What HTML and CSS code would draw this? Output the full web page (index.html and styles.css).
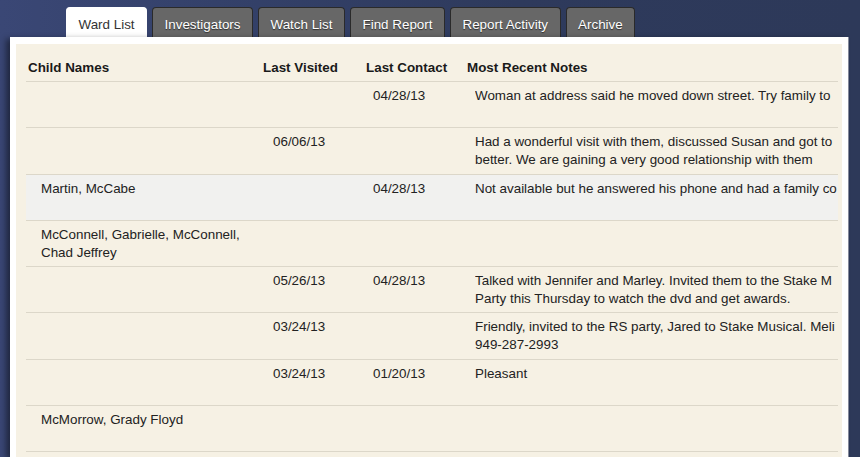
FILE: index.html
```html
<!DOCTYPE html>
<html>
<head>
<meta charset="utf-8">
<link rel="stylesheet" href="styles.css">
</head>
<body>
<div class="page">
  <nav class="tabs">
    <div class="tab active">Ward List</div>
    <div class="tab">Investigators</div>
    <div class="tab">Watch List</div>
    <div class="tab">Find Report</div>
    <div class="tab">Report Activity</div>
    <div class="tab">Archive</div>
  </nav>
  <div class="panel">
    <div class="inner">
      <div class="list">
        <div class="head">
          <div>Child Names</div>
          <div>Last Visited</div>
          <div>Last Contact</div>
          <div>Most Recent Notes</div>
        </div>
        <div class="row">
          <div class="c1"></div>
          <div></div>
          <div>04/28/13</div>
          <div class="notes"><div>Woman at address said he moved down street. Try family to</div></div>
        </div>
        <div class="row">
          <div class="c1"></div>
          <div>06/06/13</div>
          <div></div>
          <div class="notes"><div>Had a wonderful visit with them, discussed Susan and got to</div><div>better. We are gaining a very good relationship with them</div></div>
        </div>
        <div class="row alt">
          <div class="c1">Martin, McCabe</div>
          <div></div>
          <div>04/28/13</div>
          <div class="notes"><div>Not available but he answered his phone and had a family co</div></div>
        </div>
        <div class="row">
          <div class="c1">McConnell, Gabrielle, McConnell,<br>Chad Jeffrey</div>
          <div></div>
          <div></div>
          <div class="notes"></div>
        </div>
        <div class="row">
          <div class="c1"></div>
          <div>05/26/13</div>
          <div>04/28/13</div>
          <div class="notes"><div>Talked with Jennifer and Marley. Invited them to the Stake M</div><div>Party this Thursday to watch the dvd and get awards.</div></div>
        </div>
        <div class="row">
          <div class="c1"></div>
          <div>03/24/13</div>
          <div></div>
          <div class="notes"><div>Friendly, invited to the RS party, Jared to Stake Musical. Meli</div><div>949-287-2993</div></div>
        </div>
        <div class="row">
          <div class="c1"></div>
          <div>03/24/13</div>
          <div>01/20/13</div>
          <div class="notes"><div>Pleasant</div></div>
        </div>
        <div class="row">
          <div class="c1">McMorrow, Grady Floyd</div>
          <div></div>
          <div></div>
          <div class="notes"></div>
        </div>
        <div class="row">
          <div class="c1"></div>
          <div></div>
          <div></div>
          <div class="notes"></div>
        </div>
      </div>
    </div>
  </div>
</div>
</body>
</html>
```
FILE: styles.css
```css
html, body {
  margin: 0;
  padding: 0;
}
body {
  width: 860px;
  height: 457px;
  overflow: hidden;
  background: linear-gradient(90deg, #3a4775 0%, #34416a 25%, #2e3a5c 60%, #2d3959 100%);
  font-family: "Liberation Sans", Arial, Helvetica, sans-serif;
  font-size: 13.4px;
  color: #222;
}
.page {
  display: flex;
  flex-direction: column;
  height: 457px;
}
.tabs {
  display: flex;
  gap: 5px;
  padding: 7px 0 0 66px;
  height: 30px;
}
.tab {
  box-sizing: border-box;
  height: 30px;
  padding: 0 11.5px;
  line-height: 33px;
  background: #676767;
  color: #fff;
  border: 1px solid #2a2a2a;
  border-bottom: none;
  border-radius: 4px 4px 0 0;
  text-shadow: 0 1px 1px rgba(0, 0, 0, 0.55);
  white-space: nowrap;
}
.tab.active {
  background: #fff;
  color: #333;
  border-color: #fff;
  text-shadow: none;
}
.panel {
  flex: 1;
  margin: 0 12px 0 10px;
  padding: 7px 6px 0 6px;
  background: #fff;
  box-shadow: -4px 2px 6px rgba(0, 0, 0, 0.45), 1px 0 0 #8a8fa0;
  overflow: hidden;
}
.inner {
  height: 100%;
  background: #f6f1e4;
  padding: 0 4px 0 10px;
}
.list {
  overflow: hidden;
}
.head {
  display: grid;
  grid-template-columns: 235px 103px 101px 1fr;
  padding: 16px 0 5px 2px;
  line-height: 16px;
  font-weight: bold;
  color: #1a1a1a;
  border-bottom: 1px solid #dcd7c9;
  white-space: nowrap;
}
.row {
  box-sizing: border-box;
  display: grid;
  grid-template-columns: 247px 100px 102px 1fr;
  height: 46.25px;
  padding-top: 5px;
  line-height: 18px;
  border-bottom: 1px solid #dcd7c9;
}
.row.alt {
  background: #f1f1ef;
}
.c1 {
  padding-left: 15px;
}
.notes {
  overflow: hidden;
  white-space: nowrap;
}
```
